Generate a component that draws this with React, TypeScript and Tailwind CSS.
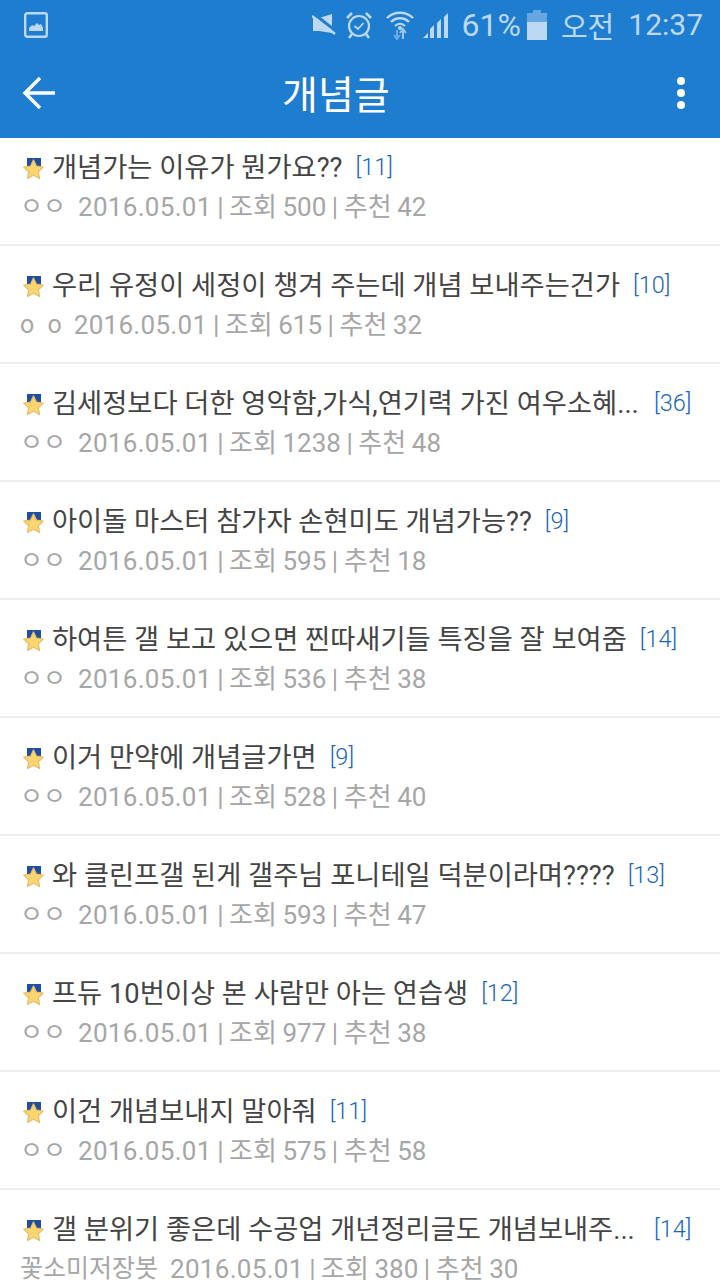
const posts = [
  { title: '개념가는 이유가 뭔가요??', count: 11, nick: 'ㅇㅇ', views: 500, likes: 42 },
  { title: '우리 유정이 세정이 챙겨 주는데 개념 보내주는건가', count: 10, nick: 'o o', views: 615, likes: 32 },
  { title: '김세정보다 더한 영악함,가식,연기력 가진 여우소혜...', count: 36, nick: 'ㅇㅇ', views: 1238, likes: 48, cut: true },
  { title: '아이돌 마스터 참가자 손현미도 개념가능??', count: 9, nick: 'ㅇㅇ', views: 595, likes: 18 },
  { title: '하여튼 갤 보고 있으면 찐따새기들 특징을 잘 보여줌', count: 14, nick: 'ㅇㅇ', views: 536, likes: 38 },
  { title: '이거 만약에 개념글가면', count: 9, nick: 'ㅇㅇ', views: 528, likes: 40 },
  { title: '와 클린프갤 된게 갤주님 포니테일 덕분이라며????', count: 13, nick: 'ㅇㅇ', views: 593, likes: 47 },
  { title: '프듀 10번이상 본 사람만 아는 연습생', count: 12, nick: 'ㅇㅇ', views: 977, likes: 38 },
  { title: '이건 개념보내지 말아줘', count: 11, nick: 'ㅇㅇ', views: 575, likes: 58 },
  { title: '갤 분위기 좋은데 수공업 개년정리글도 개념보내주...', count: 14, nick: '꽃소미저장봇', views: 380, likes: 30, cut: true },
]

function StarIcon() {
  return (
    <svg width="26" height="26" viewBox="0 0 26 26" className="shrink-0 -translate-y-px">
      <rect x="7" y="4" width="14" height="11" fill="#1d4fa3" />
      <path
        d="M13.5 6l3 6.2 6.8.9-5 4.7 1.3 6.7-6.1-3.3-6.1 3.3 1.3-6.7-5-4.7 6.8-.9z"
        fill="#fbd56e"
        stroke="#e9bd6c"
        strokeWidth="1.3"
        strokeLinejoin="round"
      />
    </svg>
  )
}

function StatusBar() {
  return (
    <div className="flex h-[50px] items-center justify-between pl-6 pr-[17px] text-[#bcd8f3]">
      <svg width="24" height="26" viewBox="0 0 24 26" fill="none">
        <rect x="1.2" y="1.2" width="21.6" height="23.6" rx="2" stroke="currentColor" strokeWidth="2.4" />
        <path d="M5 19v-3l3-3 2 1 3-3 2 2 2-1 2 4v3z" fill="currentColor" />
      </svg>
      <div className="flex items-center">
        <svg width="24" height="24" viewBox="0 0 24 24" className="mr-[9px]" fill="currentColor">
          <path d="M1 5h6l13-4v19l-13-2H1z" />
          <path d="M2 1l23 18" stroke="#1f7dd0" strokeWidth="3" />
          <path d="M0 3l23 18" stroke="currentColor" strokeWidth="2.4" />
        </svg>
        <svg width="28" height="28" viewBox="0 0 28 28" fill="none" stroke="currentColor" strokeWidth="2.2" className="mr-[13px]">
          <circle cx="14" cy="15" r="10" />
          <path d="M9.5 15l3.5 3 5.5-6" strokeWidth="1.8" />
          <path d="M2 7l5-5M26 7l-5-5M7 23l-3 4M21 23l3 4" strokeWidth="2.6" />
        </svg>
        <svg width="28" height="30" viewBox="0 0 28 30" fill="none" className="mr-[8px]">
          <path d="M1 8c7-7 19-7 26 0" stroke="currentColor" strokeWidth="2.4" />
          <path d="M5 12c5-5 13-5 18 0" stroke="currentColor" strokeWidth="2.4" />
          <path d="M9 16c3-3 7-3 10 0" stroke="currentColor" strokeWidth="2.2" />
          <circle cx="14" cy="18" r="2" fill="currentColor" />
          <path d="M11 20v8M8 25l3 4 3-4" stroke="#6fa9e2" strokeWidth="2" />
          <path d="M17 29v-9M14 23l3-4 3 4" stroke="#9cc4ec" strokeWidth="2" />
        </svg>
        <svg width="28" height="28" viewBox="0 0 28 28" className="mr-[12px]" fill="currentColor">
          <path d="M1 27l5-5v5z M8 27v-9l4-4v13z M15 27V12l4-4v19z M22 27V6l4-4v25z" />
        </svg>
        <span className="text-[32px] leading-none font-['Roboto']">61%</span>
        <div className="ml-[6px] mr-[14px] flex h-[30px] w-[20px] flex-col items-center">
          <div className="h-[3px] w-[8px] bg-[#66a7e2]" />
          <div className="h-[9px] w-full bg-[#66a7e2]" />
          <div className="h-[18px] w-full bg-[#bcd8f3]" />
        </div>
        <span className="mr-[14px] font-['Noto_Sans_CJK_KR'] text-[29px] leading-none">오전</span>
        <span className="font-['Roboto'] text-[30px] leading-none">12:37</span>
      </div>
    </div>
  )
}

function Header() {
  return (
    <div className="bg-[#1f7dd0]">
      <StatusBar />
      <div className="flex h-[88px] items-center pl-[22px] pr-[35px] pb-[2px]">
        <svg width="34" height="34" viewBox="0 0 34 34" fill="none" stroke="white" strokeWidth="3.4">
          <path d="M33 17H3M18 2L3 17l15 15" />
        </svg>
        <span className="ml-[226px] pb-[2px] font-['Noto_Sans_CJK_KR'] text-[39px] leading-none text-white">개념글</span>
        <div className="ml-auto flex flex-col gap-[4px]">
          <div className="h-[8px] w-[8px] rounded-full bg-white" />
          <div className="h-[8px] w-[8px] rounded-full bg-white" />
          <div className="h-[8px] w-[8px] rounded-full bg-white" />
        </div>
      </div>
    </div>
  )
}

export default function App() {
  return (
    <div className="h-[1280px] w-[720px] overflow-hidden bg-white font-['Roboto','Noto_Sans_CJK_KR',sans-serif]">
      <Header />
      {posts.map((p, i) => (
        <div
          key={i}
          className={`border-b-2 border-[#eeeeee] pl-5 ${i === 0 ? 'h-[108px] pt-[9px]' : 'h-[118px] pt-[19px]'}`}
        >
          <div className="flex h-10 items-center pt-[2px]">
            <StarIcon />
            <span className={`ml-[6px] whitespace-nowrap text-[27.3px] leading-10 text-[#444444] ${p.cut ? 'w-[589px]' : ''}`}>
              {p.title}
            </span>
            <span className="ml-[13px] text-[23.5px] font-light text-[#1a66b8]">[{p.count}]</span>
          </div>
          <div className="flex h-10 items-center whitespace-nowrap text-[#a6a6a6]">
            <span className="mr-3 text-[25px] [word-spacing:7px]">{p.nick}</span>
            <span className="text-[26px] [word-spacing:-0.9px]">
              <span className="tracking-[0.3px]">2016.05.01</span> | 조회 {p.views} | 추천 {p.likes}
            </span>
          </div>
        </div>
      ))}
    </div>
  )
}
